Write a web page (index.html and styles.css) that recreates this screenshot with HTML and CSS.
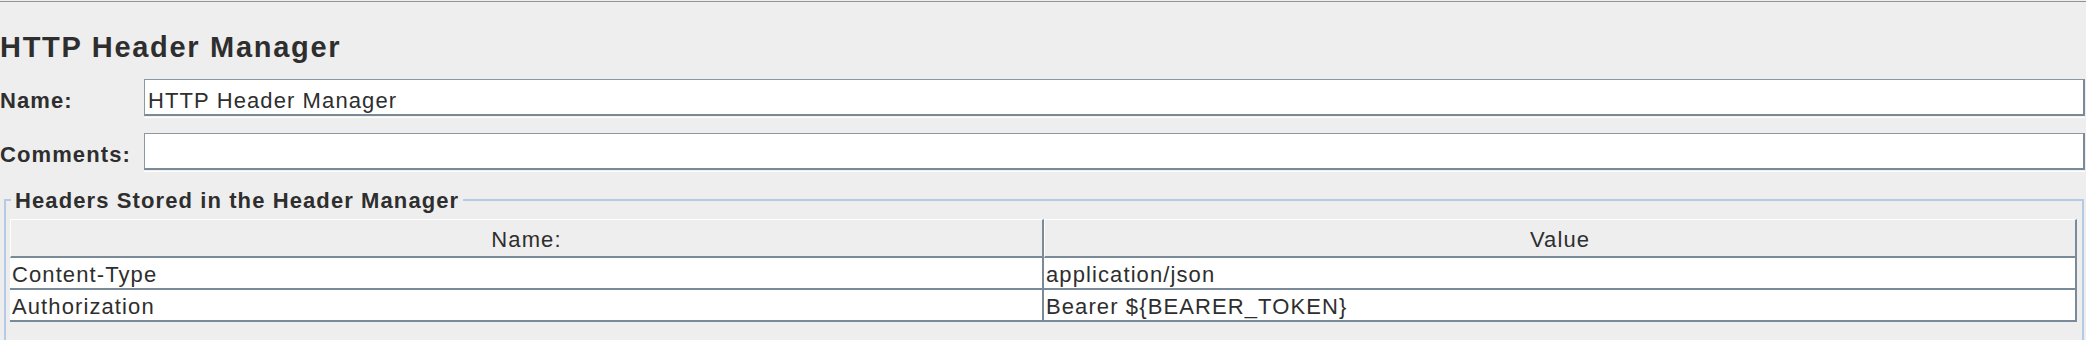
FILE: index.html
```html
<!DOCTYPE html>
<html>
<head>
<meta charset="utf-8">
<title>HTTP Header Manager</title>
<link rel="stylesheet" href="styles.css">
</head>
<body>
<div class="topline"></div>
<div class="panel">
  <h1 class="title">HTTP Header Manager</h1>
  <div class="form">
    <div class="label">Name:</div>
    <div class="field">HTTP Header Manager</div>
    <div class="label">Comments:</div>
    <div class="field"></div>
  </div>
  <fieldset class="group">
    <legend class="group-title">Headers Stored in the Header Manager</legend>
    <div class="table">
      <div class="th">Name:</div>
      <div class="th">Value</div>
      <div class="td">Content-Type</div>
      <div class="td td-val">application/json</div>
      <div class="td">Authorization</div>
      <div class="td td-val">Bearer ${BEARER_TOKEN}</div>
    </div>
  </fieldset>
</div>
</body>
</html>
```

FILE: styles.css
```css
html, body {
  margin: 0;
  padding: 0;
  background: #eeeeee;
  overflow: hidden;
}
body {
  font-family: "Liberation Sans", Arial, sans-serif;
  color: #2e2e2e;
  font-size: 22px;
  letter-spacing: 1.1px;
}
.topline {
  height: 1px;
  margin-top: 1px;
  background: #8f9499;
}
.panel {
  padding-top: 28px;
}
.title {
  margin: 0;
  font-size: 29px;
  line-height: 34px;
  font-weight: bold;
  letter-spacing: 1.7px;
}
.form {
  display: grid;
  grid-template-columns: 144px 1fr;
  row-gap: 17px;
  align-items: start;
  margin: 15px 1px 0 0;
}
.label {
  font-weight: bold;
  padding-top: 9px;
  line-height: 26px;
}
.field {
  height: 26px;
  padding: 8px 0 0 3px;
  line-height: 26px;
  background: #ffffff;
  border-top: 1px solid #8b98a5;
  border-left: 1px solid #8b98a5;
  border-right: 2px solid #7b8a99;
  border-bottom: 2px solid #7b8a99;
  box-shadow: 0 1px 0 #eeeeee, 0 2px 0 #ffffff;
  white-space: nowrap;
}
.group {
  margin: 16px 2px 0 4px;
  padding: 5px 5px 40px 4px;
  border: 2px solid #b3cbe5;
  min-width: 0;
}
.group-title {
  margin-left: 1px;
  padding: 2px 4px 0 4px;
  line-height: 26px;
  font-weight: bold;
}
.table {
  display: grid;
  grid-template-columns: 1034px 1033px;
}
.th {
  height: 33px;
  padding-top: 3px;
  line-height: 33px;
  text-align: center;
  border-top: 1px solid #ffffff;
  border-left: 1px solid #ffffff;
  border-right: 2px solid #7b8a99;
  border-bottom: 2px solid #7b8a99;
}
.td {
  height: 27px;
  line-height: 27px;
  padding: 3px 0 0 2px;
  background: #ffffff;
  border-right: 2px solid #7b8a99;
  border-bottom: 2px solid #7b8a99;
  white-space: nowrap;
}
.td-val {
  padding-left: 2px;
}
```
